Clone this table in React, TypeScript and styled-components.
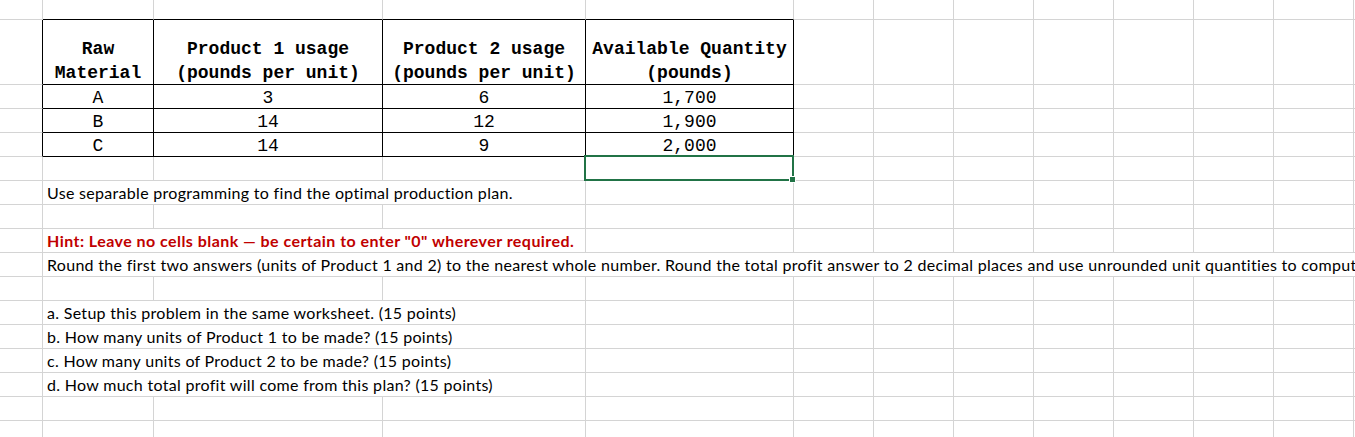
import React from "react";
import styled, { createGlobalStyle } from "styled-components";

const GRID = "#d4d4d4";
const INK = "#000000";
const GREEN = "#217346";
const HINT = "#c00000";

const GlobalStyle = createGlobalStyle`
  html, body {
    margin: 0;
    padding: 0;
    background: #ffffff;
  }
  body {
    width: 1355px;
    height: 437px;
    overflow: hidden;
  }
`;

type Line = "grid" | "ink";

const lineColor = (l?: Line) => (l === "ink" ? INK : GRID);

const Sheet = styled.div`
  display: grid;
  grid-template-columns: 43px 111px 229px 203px 208px repeat(8, 80px);
  grid-template-rows: 20px 65px repeat(15, 24px);
  width: 1434px;
  background: #ffffff;
`;

const Cell = styled.div<{ $right?: Line; $bottom?: Line; $span?: number }>`
  box-sizing: border-box;
  min-width: 0;
  grid-column: span ${(p) => p.$span ?? 1};
  border-right: 1px solid ${(p) => lineColor(p.$right)};
  border-bottom: 1px solid ${(p) => lineColor(p.$bottom)};
`;

const HeaderCell = styled(Cell)`
  display: flex;
  flex-direction: column;
  align-items: center;
  padding-top: 18px;
  font-family: "Liberation Mono", "Courier New", monospace;
  font-weight: 700;
  font-size: 18px;
  line-height: 23.5px;
  color: ${INK};
  white-space: nowrap;
`;

const DataCell = styled(Cell)`
  display: flex;
  align-items: flex-end;
  justify-content: center;
  font-family: "Liberation Mono", "Courier New", monospace;
  font-size: 18px;
  line-height: 20px;
  color: ${INK};
  white-space: nowrap;
`;

const NoteCell = styled(Cell)<{ $hint?: boolean }>`
  display: flex;
  align-items: center;
  padding-left: 4px;
  font-family: Lato, "Liberation Sans", sans-serif;
  font-size: 16px;
  font-weight: ${(p) => (p.$hint ? 700 : 400)};
  letter-spacing: ${(p) => (p.$hint ? "0.45px" : "0.3px")};
  font-variant-ligatures: none;
  line-height: 23px;
  color: ${(p) => (p.$hint ? HINT : INK)};
  white-space: nowrap;
`;

const SelectedCell = styled(Cell)`
  position: relative;
`;

const SelectionFrame = styled.div`
  position: absolute;
  left: -2px;
  top: -2px;
  right: -1px;
  bottom: -1px;
  border: 2px solid ${GREEN};
  box-sizing: border-box;
  z-index: 2;
  pointer-events: none;
`;

const FillHandle = styled.div`
  position: absolute;
  right: -3px;
  bottom: -3px;
  width: 5px;
  height: 5px;
  background: ${GREEN};
  border: 1px solid #ffffff;
  z-index: 3;
`;

const TOTAL_COLS = 13;

const Blanks: React.FC<{ count: number }> = ({ count }) => (
  <>
    {Array.from({ length: count }, (_, i) => (
      <Cell key={i} />
    ))}
  </>
);

const headers: string[][] = [
  ["Raw", "Material"],
  ["Product 1 usage", "(pounds per unit)"],
  ["Product 2 usage", "(pounds per unit)"],
  ["Available Quantity", "(pounds)"],
];

const materials = [
  ["A", "3", "6", "1,700"],
  ["B", "14", "12", "1,900"],
  ["C", "14", "9", "2,000"],
];

type Note = { text: string; hint?: boolean; span: number } | null;

const notes: Note[] = [
  { text: "Use separable programming to find the optimal production plan.", span: 3 },
  null,
  {
    text: 'Hint: Leave no cells blank \u2014 be certain to enter "0" wherever required.',
    hint: true,
    span: 3,
  },
  {
    text:
      "Round the first two answers (units of Product 1 and 2) to the nearest whole number. Round the total profit answer to 2 decimal places and use unrounded unit quantities to compute",
    span: 12,
  },
  null,
  { text: "a. Setup this problem in the same worksheet. (15 points)", span: 3 },
  { text: "b. How many units of Product 1 to be made? (15 points)", span: 3 },
  { text: "c. How many units of Product 2 to be made? (15 points)", span: 3 },
  { text: "d. How much total profit will come from this plan? (15 points)", span: 3 },
  null,
  null,
];

export default function App() {
  return (
    <>
      <GlobalStyle />
      <Sheet>
        {/* top partial row */}
        <Cell />
        <Cell $bottom="ink" />
        <Cell $bottom="ink" />
        <Cell $bottom="ink" />
        <Cell $bottom="ink" />
        <Blanks count={TOTAL_COLS - 5} />

        {/* header row */}
        <Cell $right="ink" />
        {headers.map((lines, i) => (
          <HeaderCell key={i} $right="ink" $bottom="ink">
            {lines.map((l) => (
              <span key={l}>{l}</span>
            ))}
          </HeaderCell>
        ))}
        <Blanks count={TOTAL_COLS - 5} />

        {/* data rows */}
        {materials.map((row) => (
          <React.Fragment key={row[0]}>
            <Cell $right="ink" />
            {row.map((v, i) => (
              <DataCell key={i} $right="ink" $bottom="ink">
                {v}
              </DataCell>
            ))}
            <Blanks count={TOTAL_COLS - 5} />
          </React.Fragment>
        ))}

        {/* row with selected cell */}
        <Cell />
        <Cell />
        <Cell />
        <Cell />
        <SelectedCell>
          <SelectionFrame />
          <FillHandle />
        </SelectedCell>
        <Blanks count={TOTAL_COLS - 5} />

        {/* notes */}
        {notes.map((n, i) => (
          <React.Fragment key={`n${i}`}>
            <Cell />
            {n ? (
              <>
                <NoteCell $span={n.span} $hint={n.hint}>
                  {n.text}
                </NoteCell>
                <Blanks count={TOTAL_COLS - 1 - n.span} />
              </>
            ) : (
              <Blanks count={TOTAL_COLS - 1} />
            )}
          </React.Fragment>
        ))}
      </Sheet>
    </>
  );
}
